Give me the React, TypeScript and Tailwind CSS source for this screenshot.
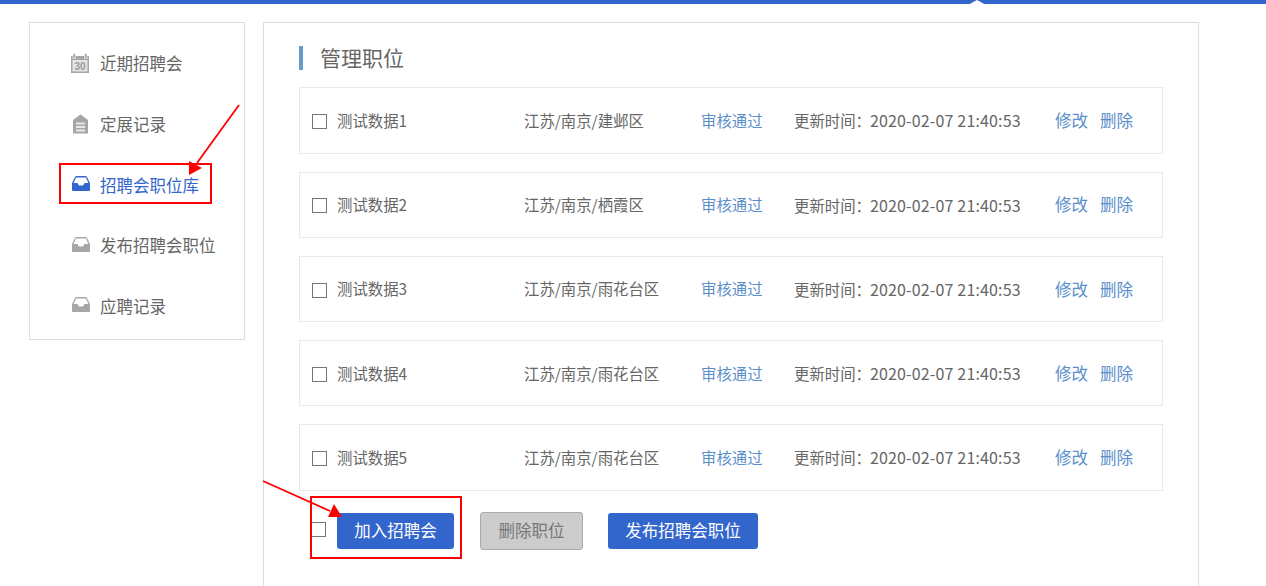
import React from "react";

const FONT = "font-['Microsoft_YaHei','Noto_Sans_CJK_SC','Noto_Sans',sans-serif]";

function Calendar() {
  return (
    <svg width="20" height="20" viewBox="0 0 20 20" className="shrink-0">
      <path d="M1 3h18v17H1z" fill="#a6a6a6" />
      <rect x="3" y="0.5" width="2.5" height="5" fill="#a6a6a6" stroke="#fff" strokeWidth="0.6" />
      <rect x="14.5" y="0.5" width="2.5" height="5" fill="#a6a6a6" stroke="#fff" strokeWidth="0.6" />
      <rect x="2.5" y="7" width="15" height="11.5" fill="#e4e4e4" />
      <text x="10" y="16.5" textAnchor="middle" fontSize="10" fontWeight="700" fill="#9a9a9a" fontFamily="Liberation Sans">30</text>
    </svg>
  );
}
function Tag() {
  return (
    <svg width="20" height="20" viewBox="0 0 20 20" className="shrink-0">
      <path d="M3 6 L10.5 0.5 L18 6 V19.5 H3 Z" fill="#a6a6a6" />
      <rect x="6" y="8.5" width="9" height="2" fill="#e8e8e8" />
      <rect x="6" y="12" width="9" height="2" fill="#e8e8e8" />
      <rect x="6" y="15.5" width="9" height="2" fill="#e8e8e8" />
    </svg>
  );
}
function Inbox({ color }: { color: string }) {
  return (
    <svg width="20" height="20" viewBox="0 0 20 20" className="shrink-0">
      <path d="M2 8 L5 2 Q5.5 1 6.5 1 H15.5 Q16.5 1 17 2 L20 8 V15 Q20 16 19 16 H3 Q2 16 2 15 Z" fill={color} />
      <path d="M6 2.5 H16 L18.4 8 H14.5 L13 10.5 H9 L7.5 8 H3.6 Z" fill="#fff" />
    </svg>
  );
}

const nav = [
  { label: "近期招聘会", icon: <Calendar /> },
  { label: "定展记录", icon: <Tag /> },
  { label: "招聘会职位库", icon: <Inbox color="#3366cc" />, active: true },
  { label: "发布招聘会职位", icon: <Inbox color="#a6a6a6" /> },
  { label: "应聘记录", icon: <Inbox color="#a6a6a6" /> },
];

const rows = [
  { name: "测试数据1", place: "江苏/南京/建邺区" },
  { name: "测试数据2", place: "江苏/南京/栖霞区" },
  { name: "测试数据3", place: "江苏/南京/雨花台区" },
  { name: "测试数据4", place: "江苏/南京/雨花台区" },
  { name: "测试数据5", place: "江苏/南京/雨花台区" },
];

function Check({ className = "" }: { className?: string }) {
  return <input type="checkbox" className={`appearance-none w-[15px] h-[15px] border-[1.5px] border-[#767676] bg-white shrink-0 m-0 ${className}`} />;
}

export default function App() {
  return (
    <div className={`${FONT} relative w-[1266px] h-[586px] overflow-hidden bg-white text-[#666]`}>
      <div className="relative h-1 bg-[#3366cc]">
        <div className="absolute left-[968px] top-0 w-0 h-0 border-l-[9px] border-r-[9px] border-b-[5px] border-l-transparent border-r-transparent border-b-white" />
      </div>
      <div className="flex items-start pl-[29px] pt-[18px] gap-[18px]">
        <aside className="w-[216px] h-[318px] border border-[#ddd] pt-[10px] shrink-0">
          {nav.map((n) => (
            <div key={n.label} className={`flex items-center h-[60.75px] pl-[40px] gap-[10px] text-[16.5px] ${n.active ? "text-[#3366cc]" : "text-[#666]"}`}>
              {n.icon}
              <span>{n.label}</span>
            </div>
          ))}
        </aside>
        <main className="w-[936px] h-[600px] border border-[#ddd] pl-[35px] pt-[23px] shrink-0">
          <div className="flex items-center h-6 border-l-4 border-[#6699cc] pl-[17px] text-[21px] text-[#666]">管理职位</div>
          <div className="mt-[17.4px] w-[864px]">
            {rows.map((r) => (
              <div key={r.name} className="flex items-center h-[66.25px] mb-[18px] border border-[#e8e8e8] pl-[12px] text-[15.4px] text-[#666]">
                <Check className="translate-y-[1px]" />
                <span className="w-[187px] ml-[10px] shrink-0">{r.name}</span>
                <span className="w-[177px] shrink-0">{r.place}</span>
                <span className="w-[93px] shrink-0 text-[#5b8fcb]">审核通过</span>
                <span className="w-[261px] shrink-0 whitespace-nowrap">
                  更新时间：<span className="-ml-[1px] text-[16px] tracking-[0.15px]">2020-02-07 21:40:53</span>
                </span>
                <span className="w-[45px] shrink-0 text-[16.5px] text-[#5b8fcb]">修改</span>
                <span className="text-[16.5px] text-[#5b8fcb]">删除</span>
              </div>
            ))}
          </div>
          <div className="flex items-center mt-[21px] pl-[12px] text-[16.5px]">
            <Check className="-translate-y-[1px]" />
            <button className="ml-[11px] w-[117px] h-9 rounded-[3px] bg-[#3366cc] text-white">加入招聘会</button>
            <button className="ml-[26px] w-[103px] h-[38px] rounded-[3px] bg-[#cccccc] border border-[#aaa] text-[#777]">删除职位</button>
            <button className="ml-[25px] w-[150px] h-9 rounded-[3px] bg-[#3366cc] text-white">发布招聘会职位</button>
          </div>
        </main>
      </div>

      <div className="absolute left-[59px] top-[163px] w-[153px] h-[41px] border-2 border-[#f00]" />
      <div className="absolute left-[310px] top-[496px] w-[152px] h-[63px] border-2 border-[#f00]" />
      <svg className="absolute left-0 top-0 pointer-events-none" width="1266" height="586">
        <line x1="239" y1="105" x2="197" y2="163" stroke="#f00" strokeWidth="1.8" />
        <polygon points="189,175 189,161 202,168" fill="#f00" />
        <line x1="263" y1="481" x2="330" y2="511" stroke="#f00" strokeWidth="1.8" />
        <polygon points="342,517 328,517 334,504" fill="#f00" />
      </svg>
    </div>
  );
}
